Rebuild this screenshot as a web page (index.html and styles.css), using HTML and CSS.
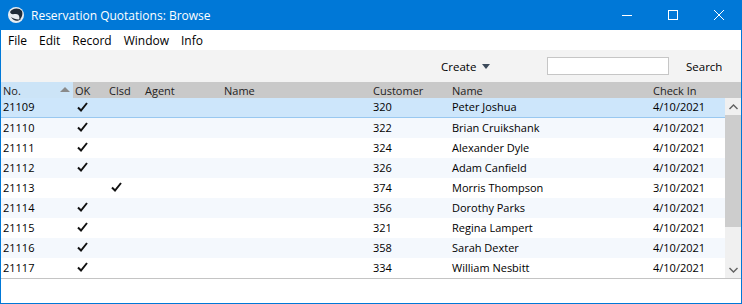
FILE: index.html
```html
<!DOCTYPE html>
<html lang="en">
<head>
  <meta charset="UTF-8" />
  <title>Reservation Quotations: Browse</title>
  <link rel="stylesheet" href="styles.css">
</head>
<body>
  <div class="window">

    <div class="titlebar">
      <svg class="app-icon" width="18" height="18" viewBox="0 0 18 18">
        <circle cx="9" cy="9" r="8" fill="#e8edf2"/>
        <path d="M3 6 C5 2 12 1 15 5 C16 8 15 12 12 14 C13 11 12 8 9 8 C6 8 4 9 3 6 Z" fill="#1f2b38"/>
        <path d="M4 11 C6 15 11 16 14 13 C11 14 7 13 4 11 Z" fill="#1f2b38"/>
      </svg>
      <span class="title">Reservation Quotations: Browse</span>
      <div class="win-buttons">
        <div class="win-btn"><svg width="10" height="10" viewBox="0 0 10 10"><path d="M0 5.5 H10" stroke="#fff" stroke-width="1"/></svg></div>
        <div class="win-btn"><svg width="10" height="10" viewBox="0 0 10 10"><rect x="0.5" y="0.5" width="9" height="9" fill="none" stroke="#fff" stroke-width="1"/></svg></div>
        <div class="win-btn"><svg width="10" height="10" viewBox="0 0 10 10"><path d="M0 0 L10 10 M10 0 L0 10" stroke="#fff" stroke-width="1"/></svg></div>
      </div>
    </div>

    <!-- Menu -->
    <div class="menubar">
      <span>File</span>
      <span>Edit</span>
      <span>Record</span>
      <span>Window</span>
      <span>Info</span>
    </div>

    <!-- Toolbar -->
    <div class="toolbar">
      <span class="create">Create <span class="caret"></span></span>
      <input type="text" class="search-box" />
      <span class="search-btn">Search</span>
    </div>

    <div class="grid-head">
      <div class="c-no sorted">No.<span class="sort-arrow"></span></div>
      <div class="c-ok">OK</div>
      <div class="c-clsd">Clsd</div>
      <div class="c-agent">Agent</div>
      <div class="c-name">Name</div>
      <div class="c-cust">Customer</div>
      <div class="c-cname">Name</div>
      <div class="c-date">Check In</div>
    </div>

    <div class="grid-body">
      <div class="rows" id="rows"></div>
      <div class="scrollbar">
        <div class="sb-arrow"><svg width="9" height="6" viewBox="0 0 9 6"><path d="M0.5 5 L4.5 1 L8.5 5" fill="none" stroke="#606060" stroke-width="1.4"/></svg></div>
        <div class="sb-thumb"></div>
        <div class="sb-track"></div>
        <div class="sb-arrow"><svg width="9" height="6" viewBox="0 0 9 6"><path d="M0.5 1 L4.5 5 L8.5 1" fill="none" stroke="#606060" stroke-width="1.4"/></svg></div>
      </div>
    </div>

    <div class="footer"></div>
  </div>

  <script>
    const quotes = [
      ["21109", true, false, "320", "Peter Joshua", "4/10/2021"],
      ["21110", true, false, "322", "Brian Cruikshank", "4/10/2021"],
      ["21111", true, false, "324", "Alexander Dyle", "4/10/2021"],
      ["21112", true, false, "326", "Adam Canfield", "4/10/2021"],
      ["21113", false, true, "374", "Morris Thompson", "3/10/2021"],
      ["21114", true, false, "356", "Dorothy Parks", "4/10/2021"],
      ["21115", true, false, "321", "Regina Lampert", "4/10/2021"],
      ["21116", true, false, "358", "Sarah Dexter", "4/10/2021"],
      ["21117", true, false, "334", "William Nesbitt", "4/10/2021"]
    ];

    const tick = '<svg width="11" height="10" viewBox="0 0 11 10"><path d="M1 5.5 L4 8.5 L10 1" fill="none" stroke="#111" stroke-width="2"/></svg>';

    const rows = document.getElementById("rows");
    quotes.forEach((q, i) => {
      const row = document.createElement("div");
      row.className = "row" + (i === 0 ? " selected" : (i % 2 ? " alt" : ""));
      row.innerHTML =
        `<div class="c-no">${q[0]}</div>` +
        `<div class="c-ok">${q[1] ? tick : ""}</div>` +
        `<div class="c-clsd">${q[2] ? tick : ""}</div>` +
        `<div class="c-agent"></div>` +
        `<div class="c-name"></div>` +
        `<div class="c-cust">${q[3]}</div>` +
        `<div class="c-cname">${q[4]}</div>` +
        `<div class="c-date">${q[5]}</div>`;
      rows.appendChild(row);
    });
  </script>
</body>
</html>
```

FILE: styles.css
```css
* {
  box-sizing: border-box;
}

body {
  margin: 0;
  font-family: 'Open Sans', 'Noto Sans', sans-serif;
  font-size: 11px;
  color: #000;
  background: #fff;
}

.window {
  width: 742px;
  height: 304px;
  border: 1px solid #0078d7;
  border-top: none;
  display: flex;
  flex-direction: column;
  overflow: hidden;
}

.titlebar {
  height: 30px;
  background: #0078d7;
  color: #fff;
  display: flex;
  align-items: center;
  padding-left: 7px;
  margin: 0 -1px;
}

.app-icon {
  margin-right: 6px;
}

.title {
  font-size: 12px;
  flex: 1;
}

.win-buttons {
  display: flex;
  height: 100%;
}

.win-btn {
  width: 46px;
  display: flex;
  align-items: center;
  justify-content: center;
}

.menubar {
  height: 20px;
  background: #fff;
  display: flex;
  align-items: center;
  padding-left: 7px;
  gap: 12px;
  font-size: 12px;
}

.toolbar {
  height: 32px;
  background: #f3f3f3;
  display: flex;
  align-items: center;
  padding-left: 440px;
  font-size: 11.5px;
}

.create {
  display: flex;
  align-items: center;
  width: 106px;
}

.caret {
  display: inline-block;
  width: 0;
  height: 0;
  border-left: 4px solid transparent;
  border-right: 4px solid transparent;
  border-top: 5px solid #3c4a5a;
  margin-left: 6px;
}

.search-box {
  width: 122px;
  height: 18px;
  border: 1px solid #c6c6c6;
  background: #fff;
  margin: 0;
  padding: 0 3px;
}

.search-btn {
  margin-left: 17px;
}

.grid-head,
.row {
  display: grid;
  grid-template-columns: 72px 34px 36px 79px 149px 79px 201px 74px;
  align-items: center;
}

.grid-head {
  height: 16px;
  background: #c9c9c9;
  color: #222;
}

.grid-head > div {
  padding-left: 2px;
  height: 100%;
  display: flex;
  align-items: center;
}

.grid-head .sorted {
  background: #cce4f7;
  position: relative;
}

.sort-arrow {
  position: absolute;
  right: 3px;
  top: 5px;
  width: 0;
  height: 0;
  border-left: 5px solid transparent;
  border-right: 5px solid transparent;
  border-bottom: 5px solid #8a8a8a;
}

.grid-body {
  display: flex;
  border-bottom: 1px solid #c4c4c4;
}

.rows {
  width: 724px;
}

.row {
  height: 20px;
  background: #fff;
}

.row.alt {
  background: #f4f8fd;
}

.row.selected {
  background: #cde6fb;
  border-bottom: 1px solid #99c8f0;
}

.row > div {
  padding-left: 2px;
  padding-bottom: 2px;
  display: flex;
  align-items: center;
}

.row .c-ok,
.row .c-clsd {
  padding-left: 4px;
}

.scrollbar {
  width: 16px;
  display: flex;
  flex-direction: column;
  background: #f0f0f0;
}

.sb-arrow {
  height: 17px;
  display: flex;
  align-items: center;
  justify-content: center;
}

.sb-thumb {
  height: 112px;
  background: #cdcdcd;
}

.sb-track {
  flex: 1;
}

.footer {
  flex: 1;
  background: #fff;
}
```
